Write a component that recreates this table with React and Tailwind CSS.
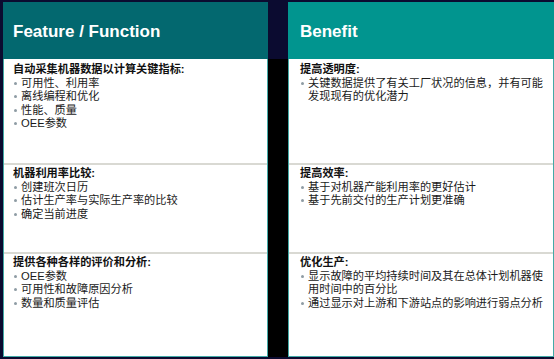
import React from "react";

const rowsLeft = [
  {
    title: "自动采集机器数据以计算关键指标:",
    items: [["可用性、利用率"], ["离线编程和优化"], ["性能、质量"], ["OEE参数"]],
  },
  {
    title: "机器利用率比较:",
    items: [["创建班次日历"], ["估计生产率与实际生产率的比较"], ["确定当前进度"]],
  },
  {
    title: "提供各种各样的评价和分析:",
    items: [["OEE参数"], ["可用性和故障原因分析"], ["数量和质量评估"]],
  },
];

const rowsRight = [
  {
    title: "提高透明度:",
    items: [["关键数据提供了有关工厂状况的信息，并有可能", "发现现有的优化潜力"]],
  },
  {
    title: "提高效率:",
    items: [["基于对机器产能利用率的更好估计"], ["基于先前交付的生产计划更准确"]],
  },
  {
    title: "优化生产:",
    items: [
      ["显示故障的平均持续时间及其在总体计划机器使", "用时间中的百分比"],
      ["通过显示对上游和下游站点的影响进行弱点分析"],
    ],
  },
];

function Row({ row, pad, className }) {
  return (
    <div className={`${className} ${pad} flex flex-col`}>
      <div className="font-bold text-[#111111]">{row.title}</div>
      {row.items.map((lines, i) => (
        <div key={i} className="flex">
          <div className="w-[8px] shrink-0 pl-[1px] h-[13.5px] flex items-center">
            <div className="w-[3px] h-[3px] rounded-full bg-[#8e9ca4]" />
          </div>
          <div className="text-[#1a1a1a] whitespace-nowrap">
            {lines.map((l, j) => (
              <div key={j}>{l}</div>
            ))}
          </div>
        </div>
      ))}
    </div>
  );
}

function Column({ width, headerBg, title, headerPad, bodyPad, rows }) {
  return (
    <div className={`${width} h-full flex flex-col`}>
      <div
        className={`h-[57px] shrink-0 ${headerBg} ${headerPad} pt-[2px] flex items-center text-white font-bold text-[17px] leading-none`}
        style={{ fontFamily: '"Liberation Sans", Arial, sans-serif' }}
      >
        {title}
      </div>
      <div className="flex-1 bg-white border border-t-0 border-[#43aaa7] flex flex-col text-[11.2px] leading-[13.5px]">
        <Row row={rows[0]} pad={bodyPad} className="h-[104px] pt-[4px]" />
        <div className="h-[2px] bg-[#d9d9d3] shrink-0" />
        <Row row={rows[1]} pad={bodyPad} className="h-[87px] pt-[2px]" />
        <div className="h-[2px] bg-[#d9d9d3] shrink-0" />
        <Row row={rows[2]} pad={bodyPad} className="flex-1 pt-[2px]" />
      </div>
    </div>
  );
}

export default function App() {
  return (
    <div
      className="w-[554px] h-[359px] bg-[#0b0b30] overflow-hidden"
      style={{ fontFamily: '"Liberation Sans", "Noto Sans CJK SC", sans-serif' }}
    >
      <div className="flex pt-[2px] pl-[3px] h-[357px]">
        <Column
          width="w-[265px]"
          headerBg="bg-[#03686f]"
          title="Feature / Function"
          headerPad="pl-[10px]"
          bodyPad="pl-[9px]"
          rows={rowsLeft}
        />
        <div className="w-[20px] h-full flex flex-col">
          <div className="h-[57px] bg-[#0b0b30]" />
          <div className="flex-1 bg-black" />
        </div>
        <Column
          width="w-[266px]"
          headerBg="bg-[#01958f]"
          title="Benefit"
          headerPad="pl-[12px]"
          bodyPad="pl-[11px]"
          rows={rowsRight}
        />
      </div>
    </div>
  );
}
